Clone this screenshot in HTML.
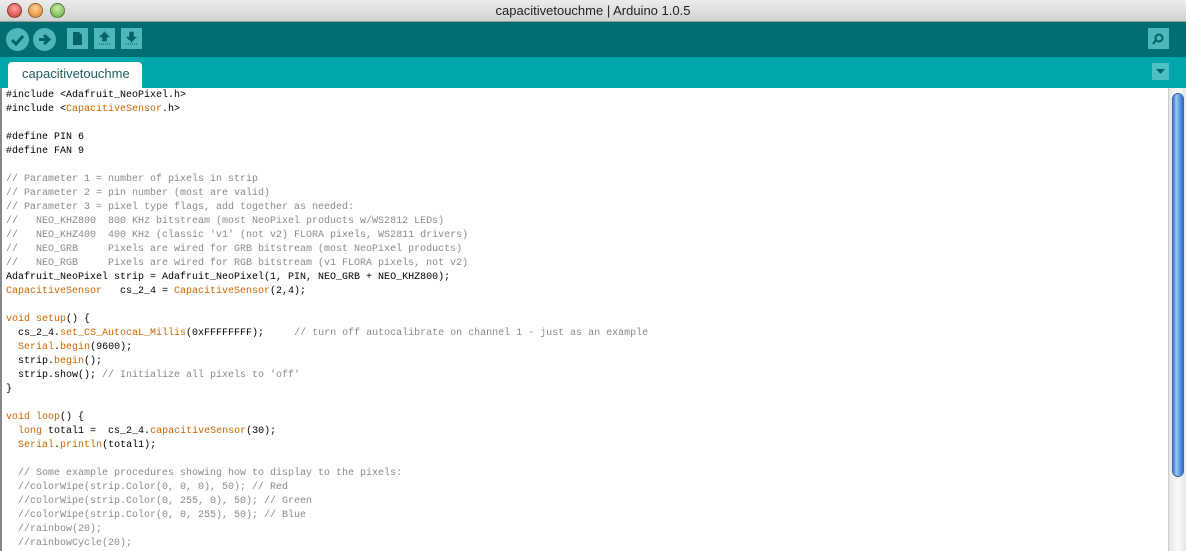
<!DOCTYPE html><html><head><style>
*{margin:0;padding:0;box-sizing:border-box}
body{width:1186px;height:551px;overflow:hidden;background:#fff;font-family:"Liberation Sans",sans-serif;position:relative}
#title{position:absolute;left:0;top:0;width:1186px;height:22px;background:linear-gradient(#ececec,#d2d2d2);border-bottom:1px solid #999;text-align:center;font-size:13px;line-height:22px;color:#222}
.tl{position:absolute;top:3px;width:15px;height:15px;border-radius:50%;border:1px solid rgba(0,0,0,.35)}
#tb{position:absolute;left:0;top:22px;width:1186px;height:35px;background:#006f74}
.rb{position:absolute;top:6px;width:23px;height:23px;border-radius:50%;background:#4db7bb}
.sq{position:absolute;top:6px;width:21px;height:21px;background:#4db7bb}
#tabs{position:absolute;left:0;top:57px;width:1186px;height:31px;background:#00a7ab}
#tab{position:absolute;left:8px;top:5px;width:134px;height:26px;background:#fff;border-radius:4px 4px 0 0;font-size:13px;color:#1c5f63;line-height:24px;padding-left:14px}
#code{position:absolute;left:6px;top:89px;font-family:"Liberation Mono",monospace;font-size:10px;line-height:14px;white-space:pre;color:#000}
.o{color:#cc6600}.c{color:#8a8a8a}
#sb{position:absolute;left:1168px;top:88px;width:18px;height:463px;background:linear-gradient(90deg,#e6e6e6,#fafafa,#e6e6e6);border-left:1px solid #ccc}
#th{position:absolute;left:3px;top:5px;width:12px;height:384px;border-radius:6px;background:linear-gradient(90deg,#3a78d0,#9cc6f2,#5d9ae6,#2f6cc4);border:1px solid #3a6bb0}
</style></head><body>
<div id="title">capacitivetouchme | Arduino 1.0.5
<div class="tl" style="left:7px;background:radial-gradient(circle at 50% 35%,#f7a4a0,#d0342c)"></div>
<div class="tl" style="left:28px;background:radial-gradient(circle at 50% 35%,#fbd29a,#e07f1f)"></div>
<div class="tl" style="left:50px;background:radial-gradient(circle at 50% 35%,#cdeba8,#5fae3a)"></div>
</div>
<div id="tb">
<div class="rb" style="left:6px"><svg width="23" height="23"><path d="M6 12l4 4 7-8" stroke="#006468" stroke-width="3" fill="none"/></svg></div>
<div class="rb" style="left:33px"><svg width="23" height="23"><path d="M6 11.5h8M11 7l5 4.5-5 4.5" stroke="#006468" stroke-width="3" fill="none"/></svg></div>
<div class="sq" style="left:67px"><svg width="21" height="21"><path d="M6 4h6l3 3v10H6z" fill="#006468"/></svg></div>
<div class="sq" style="left:94px"><svg width="21" height="21"><path d="M10.5 4l5 5h-3v4h-4v-4h-3z M5 16h11" fill="#006468" stroke="#006468" stroke-dasharray="1 1"/></svg></div>
<div class="sq" style="left:121px"><svg width="21" height="21"><path d="M10.5 14l5-5h-3V4h-4v5h-3z M5 16h11" fill="#006468" stroke="#006468" stroke-dasharray="1 1"/></svg></div>
<div class="sq" style="left:1148px"><svg width="21" height="21"><circle cx="11" cy="10" r="3.5" stroke="#006468" stroke-width="2" fill="none"/><path d="M8 12l-3 4" stroke="#006468" stroke-width="2"/></svg></div>
</div>
<div id="tabs"><div id="tab">capacitivetouchme</div>
<div style="position:absolute;left:1152px;top:6px;width:17px;height:17px;background:#4dc0c3"><svg width="17" height="17"><path d="M4 6h9l-4.5 5z" fill="#006468"/></svg></div></div>
<div id="code">#include &lt;Adafruit_NeoPixel.h&gt;
#include &lt;<span class="o">CapacitiveSensor</span>.h&gt;

#define PIN 6
#define FAN 9

<span class="c">// Parameter 1 = number of pixels in strip
// Parameter 2 = pin number (most are valid)
// Parameter 3 = pixel type flags, add together as needed:
//   NEO_KHZ800  800 KHz bitstream (most NeoPixel products w/WS2812 LEDs)
//   NEO_KHZ400  400 KHz (classic 'v1' (not v2) FLORA pixels, WS2811 drivers)
//   NEO_GRB     Pixels are wired for GRB bitstream (most NeoPixel products)
//   NEO_RGB     Pixels are wired for RGB bitstream (v1 FLORA pixels, not v2)</span>
Adafruit_NeoPixel strip = Adafruit_NeoPixel(1, PIN, NEO_GRB + NEO_KHZ800);
<span class="o">CapacitiveSensor</span>   cs_2_4 = <span class="o">CapacitiveSensor</span>(2,4);

<span class="o">void</span> <span class="o">setup</span>() {
  cs_2_4.<span class="o">set_CS_AutocaL_Millis</span>(0xFFFFFFFF);     <span class="c">// turn off autocalibrate on channel 1 - just as an example</span>
  <span class="o">Serial</span>.<span class="o">begin</span>(9600);
  strip.<span class="o">begin</span>();
  strip.show(); <span class="c">// Initialize all pixels to 'off'</span>
}

<span class="o">void</span> <span class="o">loop</span>() {
  <span class="o">long</span> total1 =  cs_2_4.<span class="o">capacitiveSensor</span>(30);
  <span class="o">Serial</span>.<span class="o">println</span>(total1);

<span class="c">  // Some example procedures showing how to display to the pixels:
  //colorWipe(strip.Color(0, 0, 0), 50); // Red
  //colorWipe(strip.Color(0, 255, 0), 50); // Green
  //colorWipe(strip.Color(0, 0, 255), 50); // Blue
  //rainbow(20);
  //rainbowCycle(20);</span></div>
<div style="position:absolute;left:0;top:88px;width:2px;height:463px;background:#888"></div>
<div id="sb"><div id="th"></div></div>
</body></html>
